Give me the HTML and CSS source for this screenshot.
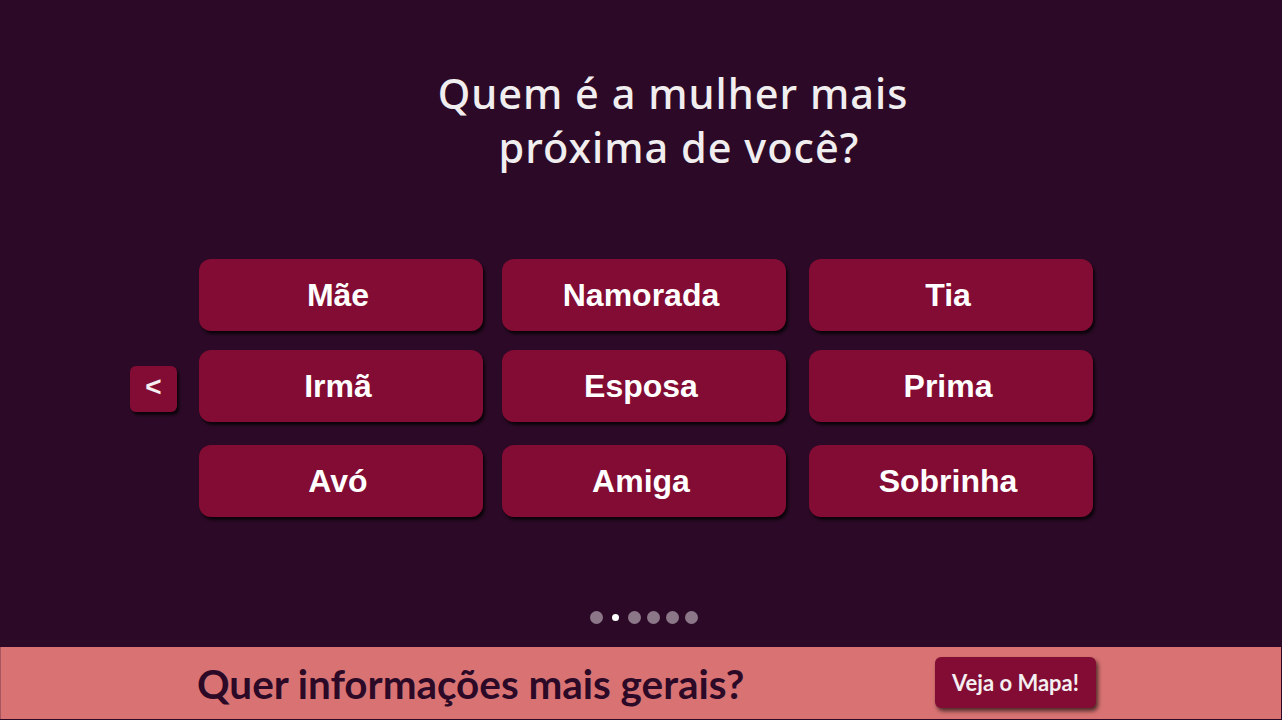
FILE: index.html
```html
<!DOCTYPE html>
<html lang="pt">
<head>
<meta charset="utf-8">
<link rel="stylesheet" href="styles.css">
</head>
<body>
<div class="page">
  <main class="quiz">
    <h1 class="question">Quem é a mulher mais<br>&nbsp;próxima de você?</h1>
    <div class="answers-wrap">
      <button class="back">&lt;</button>
      <div class="answers">
        <button class="answer">Mãe</button>
        <button class="answer">Namorada</button>
        <button class="answer">Tia</button>
        <button class="answer">Irmã</button>
        <button class="answer">Esposa</button>
        <button class="answer">Prima</button>
        <button class="answer">Avó</button>
        <button class="answer">Amiga</button>
        <button class="answer">Sobrinha</button>
      </div>
    </div>
    <div class="dots">
      <span class="dot"></span>
      <span class="dot active"></span>
      <span class="dot"></span>
      <span class="dot"></span>
      <span class="dot"></span>
      <span class="dot"></span>
    </div>
  </main>
  <footer class="footer">
    <p class="footer-text">Quer informações mais gerais?</p>
    <button class="map-btn">Veja o Mapa!</button>
  </footer>
</div>
</body>
</html>
```

FILE: styles.css
```css
html, body {
  margin: 0;
  padding: 0;
  background: #2c0a27;
}
.page {
  width: 1282px;
  height: 720px;
  display: flex;
  flex-direction: column;
  overflow: hidden;
}
.quiz {
  flex: 1;
  display: flex;
  flex-direction: column;
  align-items: center;
}
.question {
  margin: 66px 0 0 0;
  padding-left: 64px;
  font-family: "Noto Sans", sans-serif;
  font-weight: 500;
  font-size: 41.5px;
  line-height: 54px;
  letter-spacing: 1px;
  color: #f1eef0;
  text-align: center;
}
.answers-wrap {
  margin-top: 85px;
  display: flex;
  align-items: flex-start;
  padding-right: 59px;
}
.back {
  margin-top: 107px;
  margin-right: 22px;
  width: 47px;
  height: 46px;
  border: none;
  border-radius: 6px;
  background: #820c33;
  color: #f5eef1;
  font-family: "Liberation Sans", Arial, sans-serif;
  font-weight: bold;
  font-size: 28px;
  padding: 0 0 4px 0;
  box-shadow: 2px 3px 3px rgba(0, 0, 0, 0.75);
}
.answers {
  display: grid;
  grid-template-columns: 303px 307px 284px;
  grid-template-rows: 91px 95px 72px;
}
.answer {
  width: 284px;
  height: 72px;
  border: none;
  border-radius: 12px;
  background: #820c33;
  color: #ffffff;
  font-family: "Liberation Sans", Arial, sans-serif;
  font-weight: bold;
  font-size: 32px;
  padding: 0 6px 0 0;
  box-shadow: 2px 3px 3px rgba(0, 0, 0, 0.75);
}
.dots {
  margin-top: 94px;
  margin-left: 6px;
  display: flex;
  align-items: center;
  gap: 6px;
}
.dot {
  width: 13px;
  height: 13px;
  border-radius: 50%;
  background: #8c7789;
}
.dot.active {
  width: 7px;
  height: 7px;
  margin: 0 3px;
  background: #ffffff;
}
.footer {
  height: 72px;
  margin-bottom: 1px;
  margin-right: 1px;
  background: #d97373;
  border-left: 1px solid #a8565d;
  display: flex;
  align-items: center;
  box-sizing: border-box;
}
.footer-text {
  margin: 0 0 0 196px;
  font-family: Lato, sans-serif;
  font-weight: bold;
  font-size: 40.4px;
  color: #2c0a27;
  width: 738px;
}
.map-btn {
  margin-top: -1px;
  width: 161px;
  height: 51px;
  border: none;
  border-radius: 6px;
  background: #820c33;
  color: #f5eef1;
  font-family: Lato, sans-serif;
  font-weight: bold;
  font-size: 22px;
  padding: 0;
  box-shadow: 2px 3px 4px rgba(0, 0, 0, 0.65);
}
```
